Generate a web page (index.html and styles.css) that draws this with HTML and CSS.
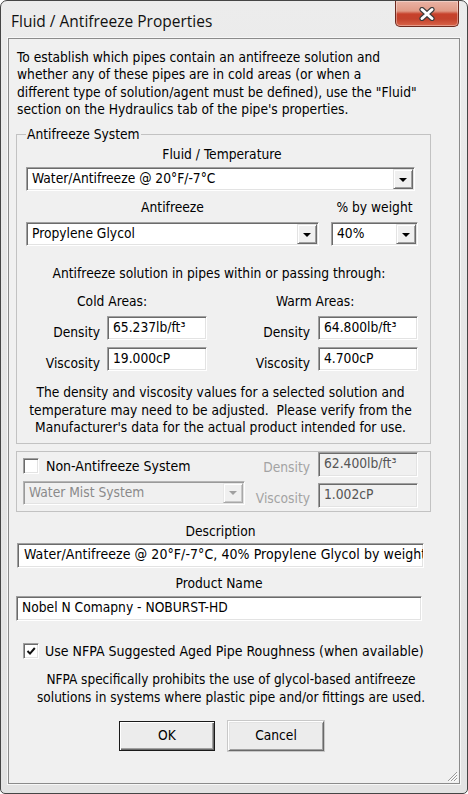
FILE: index.html
```html
<!DOCTYPE html>
<html>
<head>
<meta charset="utf-8">
<title>Fluid / Antifreeze Properties</title>
<link rel="stylesheet" href="styles.css">
</head>
<body>
<div class="window">
  <div class="titlebar">
    <span class="title">Fluid / Antifreeze Properties</span>
    <div class="close">
      <svg width="18" height="14" viewBox="0 0 18 14">
        <path d="M4 2.5 L14 11.5 M14 2.5 L4 11.5" stroke="#3b3b3b" stroke-width="5.2" stroke-linecap="round" fill="none"/>
        <path d="M4 2.5 L14 11.5 M14 2.5 L4 11.5" stroke="#ffffff" stroke-width="3" stroke-linecap="round" fill="none"/>
      </svg>
    </div>
  </div>
  <div class="client">
    <p class="intro">To establish which pipes contain an antifreeze solution and<br>whether any of these pipes are in cold areas (or when a<br>different type of solution/agent must be defined), use the "Fluid"<br>section on the Hydraulics tab of the pipe's properties.</p>

    <fieldset class="group af">
      <legend>Antifreeze System</legend>
      <div class="cap">Fluid / Temperature</div>
      <div class="combo wide"><span class="val">Water/Antifreeze @ 20°F/-7°C</span><span class="drop"><i class="tri"></i></span></div>
      <div class="row2">
        <div class="col1">
          <div class="cap">Antifreeze</div>
          <div class="combo"><span class="val">Propylene Glycol</span><span class="drop"><i class="tri"></i></span></div>
        </div>
        <div class="col2">
          <div class="cap">% by weight</div>
          <div class="combo"><span class="val">40%</span><span class="drop"><i class="tri"></i></span></div>
        </div>
      </div>
      <div class="cap sol">Antifreeze solution in pipes within or passing through:</div>
      <div class="areas">
        <div class="ah cold">Cold Areas:</div>
        <div class="ah warm">Warm Areas:</div>
        <div class="lbl l1">Density</div><div class="edit">65.237lb/ft³</div>
        <div class="lbl l2">Density</div><div class="edit">64.800lb/ft³</div>
        <div class="lbl l1">Viscosity</div><div class="edit">19.000cP</div>
        <div class="lbl l2">Viscosity</div><div class="edit">4.700cP</div>
      </div>
      <p class="note">The density and viscosity values for a selected solution and<br>temperature may need to be adjusted.&nbsp; Please verify from the<br>Manufacturer's data for the actual product intended for use.</p>
    </fieldset>

    <div class="group nonaf">
      <div class="chkline"><span class="chk"></span><span class="chklbl">Non-Antifreeze System</span></div>
      <div class="lbl dis">Density</div>
      <div class="edit disabled">62.400lb/ft³</div>
      <div class="combo disabled mist"><span class="val">Water Mist System</span><span class="drop"><i class="tri"></i></span></div>
      <div class="lbl dis">Viscosity</div>
      <div class="edit disabled">1.002cP</div>
    </div>

    <div class="cap desccap">Description</div>
    <div class="edit desc">Water/Antifreeze @ 20°F/-7°C, 40% Propylene Glycol by weight</div>
    <div class="cap prodcap">Product Name</div>
    <div class="edit prod">Nobel N Comapny - NOBURST-HD</div>

    <div class="chkline rough">
      <span class="chk"><svg width="12" height="12" viewBox="0 0 12 12"><path d="M2.5 6 L5 8.6 L9.8 3" stroke="#111" stroke-width="2" fill="none"/></svg></span>
      <span class="chklbl">Use NFPA Suggested Aged Pipe Roughness (when available)</span>
    </div>

    <p class="nfpa">NFPA specifically prohibits the use of glycol-based antifreeze<br>solutions in systems where plastic pipe and/or fittings are used.</p>

    <div class="buttons">
      <div class="btn default">OK</div>
      <div class="btn">Cancel</div>
    </div>

    <svg class="grip" width="13" height="13" viewBox="0 0 13 13">
      <path d="M12 3 L3 12 M12 6 L6 12 M12 9 L9 12" stroke="#9a9a9a" stroke-width="1" fill="none"/>
      <path d="M12.8 3.8 L3.8 12.8 M12.8 6.8 L6.8 12.8 M12.8 9.8 L9.8 12.8" stroke="#ffffff" stroke-width="1" fill="none"/>
    </svg>
  </div>
</div>
</body>
</html>
```

FILE: styles.css
```css
* { box-sizing: border-box; }
html, body { margin: 0; padding: 0; background: #ffffff; }
body {
  width: 468px;
  height: 794px;
  font-family: "DejaVu Sans Condensed", "Liberation Sans", sans-serif;
  font-size: 13.7px;
  color: #000;
  overflow: hidden;
}

.window {
  width: 468px;
  height: 794px;
  border: 1px solid #454545;
  border-radius: 7px 7px 5px 5px;
  background: linear-gradient(180deg, #ececec 0%, #e6e6e6 40%, #e3e3e3 100%);
  display: flex;
  flex-direction: column;
  padding: 0 7px 9px 7px;
}

.titlebar {
  height: 37px;
  display: flex;
  align-items: flex-start;
  justify-content: space-between;
  flex: none;
}
.title {
  font-family: "Open Sans", "Noto Sans", sans-serif;
  font-size: 15.5px;
  line-height: 20px;
  margin: 10px 0 0 3px;
  color: #111;
}
.close {
  width: 64px;
  height: 26px;
  margin-right: 1px;
  border: 1px solid #6e2a1f;
  border-top: none;
  border-radius: 0 0 5px 5px;
  background: linear-gradient(180deg, #e9b3a5 0%, #e09a86 40%, #c7412b 52%, #c3422c 72%, #d9654a 100%);
  box-shadow: inset 0 0 0 1px rgba(255,255,255,0.35);
  display: flex;
  align-items: center;
  justify-content: center;
}

.client {
  flex: 1;
  position: relative;
  border: 1px solid #8b8b8b;
  background: #f0f0f0;
  padding-top: 10px;
  box-shadow: 0 0 0 1px #f7f7f7;
}

.intro {
  margin: 0 0 0 8px;
  line-height: 17.33px;
  white-space: nowrap;
}

.group {
  width: 415px;
  border: 1px solid #c2c2c2;
  margin: 0;
}
.af {
  margin: 7.7px 0 0 7px;
  padding: 4px 12px 6px 9px;
  min-width: 0;
}
.af legend {
  padding: 0 1px;
  line-height: 16px;
}

.cap {
  line-height: 16px;
  text-align: center;
  white-space: nowrap;
}

.combo {
  height: 24px;
  display: flex;
  align-items: stretch;
  background: #fff;
  border: 1px solid;
  border-color: #a0a0a0 #ffffff #ffffff #a0a0a0;
  box-shadow: inset 1px 1px 0 #6b6b6b, inset -1px -1px 0 #e3e3e3;
}
.combo .val {
  flex: 1;
  padding: 0 0 0 5px;
  line-height: 21px;
  white-space: nowrap;
  overflow: hidden;
}
.drop {
  width: 20px;
  margin: 1px 1px 1px 0;
  background: #f0f0f0;
  border: 1px solid;
  border-color: #e3e3e3 #6b6b6b #6b6b6b #e3e3e3;
  box-shadow: inset 1px 1px 0 #ffffff, inset -1px -1px 0 #a0a0a0;
  display: flex;
  align-items: center;
  justify-content: center;
}
.tri {
  width: 0;
  height: 0;
  border-left: 4px solid transparent;
  border-right: 4px solid transparent;
  border-top: 4px solid #000;
  margin-top: 1px;
}
.combo.wide { width: 389px; margin-top: 5px; }

.row2 {
  display: flex;
  gap: 12px;
  margin-top: 8px;
}
.col1 { width: 293px; }
.col2 { width: 87px; }
.row2 .combo { margin-top: 7px; }

.sol { margin-top: 19px; padding-right: 6px; }

.areas {
  display: grid;
  grid-template-columns: 81px 100px 111px 100px;
  grid-template-rows: 16px 24px 24px;
  row-gap: 7px;
  margin-top: 12px;
}
.ah { line-height: 16px; white-space: nowrap; }
.ah.cold { grid-column: 1 / 3; padding-left: 51px; }
.ah.warm { grid-column: 3 / 5; padding-left: 69px; }
.lbl {
  text-align: right;
  line-height: 24px;
  padding-top: 4px;
  white-space: nowrap;
}
.lbl.l1 { padding-right: 7px; }
.lbl.l2 { padding-right: 8px; }

.edit {
  height: 24px;
  background: #fff;
  border: 1px solid;
  border-color: #a0a0a0 #ffffff #ffffff #a0a0a0;
  box-shadow: inset 1px 1px 0 #6b6b6b, inset -1px -1px 0 #e3e3e3;
  padding: 0 0 0 5px;
  line-height: 21px;
  white-space: nowrap;
  overflow: hidden;
}

.note {
  margin: 13.25px 0 0 0;
  line-height: 17.5px;
  text-align: center;
  padding-right: 3px;
  white-space: nowrap;
}

.nonaf {
  margin: 7px 0 0 7px;
  padding: 0 12px 3px 6px;
  display: grid;
  grid-template-columns: 222px 73px 100px;
  grid-template-rows: 25px 25px;
  row-gap: 6px;
}
.nonaf .edit { height: 25px; background: #f0f0f0; color: #555; }
.lbl.dis {
  color: #a3a3a3;
  padding-right: 8px;
  padding-top: 3px;
}
.combo.mist {
  margin-top: -2px;
  background: #f0f0f0;
  color: #8a8a8a;
  border-color: #b5b5b5 #ffffff #ffffff #b5b5b5;
  box-shadow: inset 1px 1px 0 #9a9a9a, inset -1px -1px 0 #e3e3e3;
}
.combo.mist .drop {
  border-color: #e8e8e8 #a8a8a8 #a8a8a8 #e8e8e8;
  box-shadow: inset 1px 1px 0 #ffffff, inset -1px -1px 0 #c8c8c8;
}
.combo.mist .tri { border-top-color: #a0a0a0; }

.chkline {
  display: flex;
  align-items: center;
  gap: 7px;
  padding-top: 6px;
  align-self: start;
}
.chk {
  width: 16px;
  height: 16px;
  flex: none;
  background: #fff;
  border: 1px solid;
  border-color: #a0a0a0 #ffffff #ffffff #a0a0a0;
  box-shadow: inset 1px 1px 0 #6b6b6b, inset -1px -1px 0 #e3e3e3;
  display: flex;
  align-items: center;
  justify-content: center;
}
.chklbl { line-height: 16px; white-space: nowrap; font-size: 14px; }

.desccap { margin: 11px 0 0 8px; width: 407px; }
.edit.desc { margin: 4px 0 0 8px; width: 407px; height: 25px; padding-left: 6px; font-size: 14px; letter-spacing: 0.06px; }
.prodcap { margin: 7.3px 0 0 7px; width: 406px; }
.edit.prod { margin: 5px 0 0 7px; width: 406px; height: 25px; }

.chkline.rough {
  margin: 22px 0 0 14px;
  padding-top: 0;
  gap: 6px;
}

.nfpa {
  margin: 11px 0 0 8px;
  width: 428px;
  line-height: 18px;
  text-align: center;
  white-space: nowrap;
  font-size: 13.5px;
}

.buttons {
  display: flex;
  gap: 13px;
  margin: 15px 0 0 110px;
}
.btn {
  width: 96px;
  height: 30px;
  background: #ececec;
  border: 1px solid;
  border-color: #ffffff #696969 #696969 #ffffff;
  box-shadow: inset 1px 1px 0 #e3e3e3, inset -1px -1px 0 #a0a0a0, 0 0 0 1px #c8c8c8;
  text-align: center;
  line-height: 27px;
}
.btn.default {
  border: 1px solid #1a1a1a;
  box-shadow: inset 1px 1px 0 #ffffff, inset -1px -1px 0 #696969, inset -2px -2px 0 #a0a0a0;
}

.grip {
  position: absolute;
  right: 1px;
  bottom: 1px;
}
```
